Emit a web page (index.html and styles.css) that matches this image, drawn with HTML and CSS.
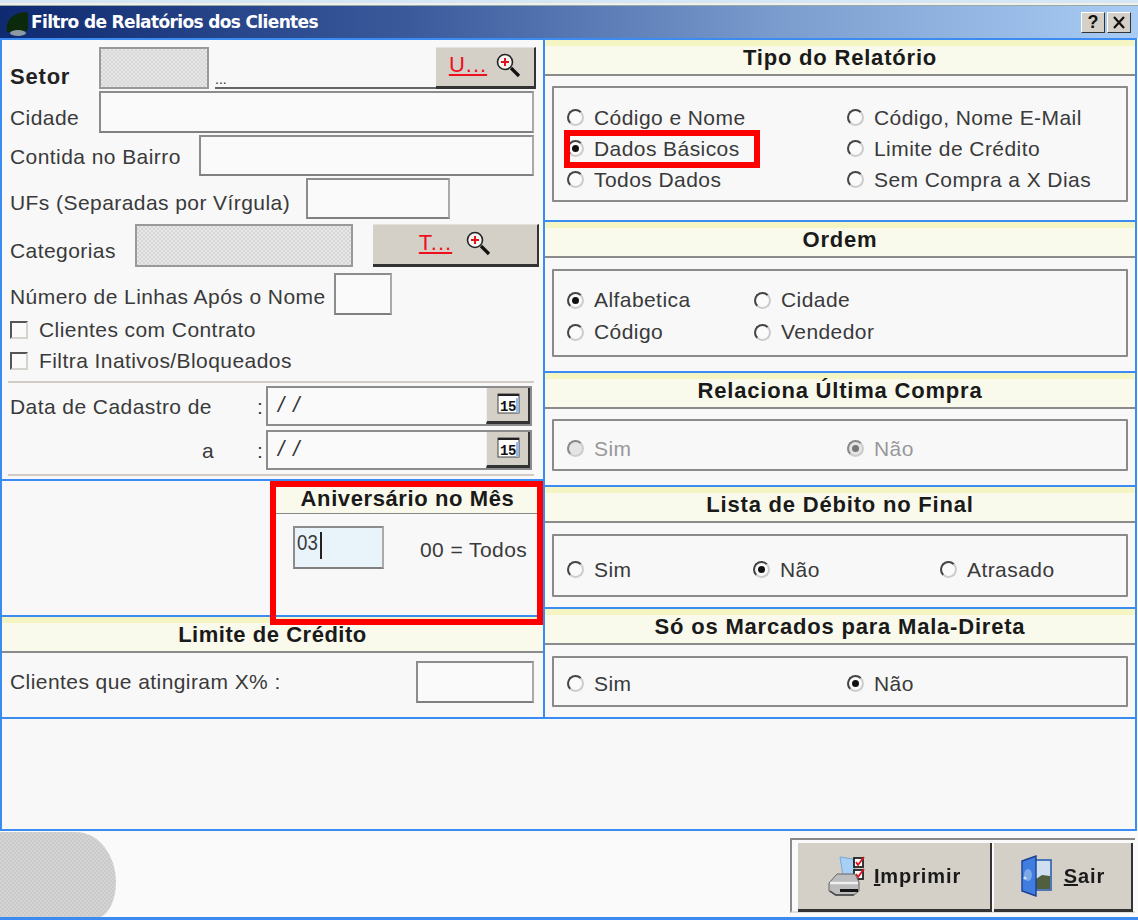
FILE: index.html
```html
<!DOCTYPE html>
<html lang="pt">
<head>
<meta charset="utf-8">
<title>Filtro de Relatórios dos Clientes</title>
<link rel="stylesheet" href="styles.css">
</head>
<body>
<div class="window">
  <div class="top-stripe"></div>
  <header class="titlebar">
    <svg class="app-icon" width="24" height="26" viewBox="0 0 24 26"><path d="M2 22C0 12 6 3 20 2l3 1v17l-8 3z" fill="#0b2a0b"/><ellipse cx="13" cy="23" rx="8" ry="3" fill="#8d9aa6"/></svg>
    <span class="title-text">Filtro de Relatórios dos Clientes</span>
    <div class="title-btns">
      <span class="title-btn">?</span>
      <span class="title-btn">
        <svg width="14" height="13" viewBox="0 0 14 13"><path d="M2 1l10 11M12 1L2 12" stroke="#111" stroke-width="2.2"/></svg>
      </span>
    </div>
  </header>

  <div class="main">
    <div class="col-left">
      <section class="panel p-filters">
        <div class="row r-setor">
          <label class="lbl strong w89 mb0">Setor</label>
          <div class="field grey w110"></div>
          <div class="dots">...</div>
          <button class="tool-btn w100"><span class="hot">U...</span>
            <svg class="lens" width="26" height="26" viewBox="0 0 26 26"><circle cx="10" cy="10" r="7.5" fill="#f4f4f0" stroke="#222" stroke-width="1.6"/><path d="M10 6v8M6 10h8" stroke="#e01020" stroke-width="2"/><path d="M16 16l8 8" stroke="#111" stroke-width="3.2"/></svg>
          </button>
        </div>
        <div class="row r-cidade">
          <label class="lbl w89 mb3">Cidade</label>
          <div class="field w435"></div>
        </div>
        <div class="row r-bairro">
          <label class="lbl w189 mb7">Contida no Bairro</label>
          <div class="field w335"></div>
        </div>
        <div class="row r-ufs">
          <label class="lbl w296 mb4">UFs (Separadas por Vírgula)</label>
          <div class="field w144"></div>
        </div>
        <div class="row r-cat">
          <label class="lbl w125 mb4">Categorias</label>
          <div class="field grey w218"></div>
          <button class="tool-btn w166 gap20"><span class="hot">T...</span>
            <svg class="lens" width="26" height="26" viewBox="0 0 26 26"><circle cx="10" cy="10" r="7.5" fill="#f4f4f0" stroke="#222" stroke-width="1.6"/><path d="M10 6v8M6 10h8" stroke="#e01020" stroke-width="2"/><path d="M16 16l8 8" stroke="#111" stroke-width="3.2"/></svg>
          </button>
        </div>
        <div class="row r-num">
          <label class="lbl w324 mb6">Número de Linhas Após o Nome</label>
          <div class="field w58"></div>
        </div>
        <div class="row r-check1"><span class="check"></span><span class="lbl">Clientes com Contrato</span></div>
        <div class="row r-check2"><span class="check"></span><span class="lbl">Filtra Inativos/Bloqueados</span></div>
        <div class="rule r-rule1"></div>
        <div class="row r-date1">
          <label class="lbl w247 mb7">Data de Cadastro de</label>
          <span class="lbl colon mb7">:</span>
          <div class="field date"><span class="date-text">/ /</span><button class="cal-btn"><svg width="26" height="24" viewBox="0 0 26 24"><rect x="2" y="2" width="21" height="19" fill="#fdfdfd" stroke="#444"/><rect x="2" y="2" width="21" height="2" fill="#222"/><rect x="20" y="6" width="3" height="15" fill="#9db8e0"/><text x="4" y="19" class="cal-num">15</text></svg></button></div>
        </div>
        <div class="row r-date2">
          <label class="lbl w247 a-label mb7">a</label>
          <span class="lbl colon mb7">:</span>
          <div class="field date"><span class="date-text">/ /</span><button class="cal-btn"><svg width="26" height="24" viewBox="0 0 26 24"><rect x="2" y="2" width="21" height="19" fill="#fdfdfd" stroke="#444"/><rect x="2" y="2" width="21" height="2" fill="#222"/><rect x="20" y="6" width="3" height="15" fill="#9db8e0"/><text x="4" y="19" class="cal-num">15</text></svg></button></div>
        </div>
        <div class="rule r-rule2"></div>
      </section>

      <section class="panel p-birthday">
        <div class="bday-body">
          <h2 class="bday-head">Aniversário no Mês</h2>
          <div class="bday-row">
            <div class="field month"><span class="month-val">03</span><span class="caret"></span></div>
            <span class="lbl todos">00 = Todos</span>
          </div>
        </div>
      </section>

      <section class="panel p-credit">
        <h2 class="head head-tight">Limite de Crédito</h2>
        <div class="credit-row">
          <label class="lbl w406">Clientes que atingiram X% :</label>
          <div class="field w118"></div>
        </div>
      </section>
      <div class="highlight-month"></div>
    </div>

    <div class="col-right">
      <section class="panel p-tipo">
        <h2 class="head">Tipo do Relatório</h2>
        <div class="group g-tipo">
          <div class="radio-grid cols-280">
            <div class="radio r1"><span class="dot"></span>Código e Nome</div>
            <div class="radio r1"><span class="dot"></span>Código, Nome E-Mail</div>
            <div class="radio r1 highlight-host"><span class="dot on"></span>Dados Básicos<span class="highlight-basic"></span></div>
            <div class="radio r1"><span class="dot"></span>Limite de Crédito</div>
            <div class="radio r1"><span class="dot"></span>Todos Dados</div>
            <div class="radio r1"><span class="dot"></span>Sem Compra a X Dias</div>
          </div>
        </div>
      </section>
      <section class="panel p-ordem">
        <h2 class="head">Ordem</h2>
        <div class="group g-ordem">
          <div class="radio-grid cols-187 rows-32">
            <div class="radio"><span class="dot on"></span>Alfabetica</div>
            <div class="radio"><span class="dot"></span>Cidade</div>
            <div class="radio"><span class="dot"></span>Código</div>
            <div class="radio"><span class="dot"></span>Vendedor</div>
          </div>
        </div>
      </section>
      <section class="panel p-relaciona">
        <h2 class="head">Relaciona Última Compra</h2>
        <div class="group g-rel">
          <div class="radio-grid cols-280">
            <div class="radio off"><span class="dot off-dot"></span>Sim</div>
            <div class="radio off"><span class="dot on off-dot"></span>Não</div>
          </div>
        </div>
      </section>
      <section class="panel p-lista">
        <h2 class="head">Lista de Débito no Final</h2>
        <div class="group g-lista">
          <div class="radio-grid cols-3">
            <div class="radio"><span class="dot"></span>Sim</div>
            <div class="radio"><span class="dot on"></span>Não</div>
            <div class="radio"><span class="dot"></span>Atrasado</div>
          </div>
        </div>
      </section>
      <section class="panel p-mala">
        <h2 class="head">Só os Marcados para Mala-Direta</h2>
        <div class="group g-mala">
          <div class="radio-grid cols-280">
            <div class="radio"><span class="dot"></span>Sim</div>
            <div class="radio"><span class="dot on"></span>Não</div>
          </div>
        </div>
      </section>
    </div>
  </div>
  <section class="panel p-empty"></section>

  <footer class="footer">
    <div class="blob"></div>
    <div class="actions">
      <button class="act-btn act-print">
        <svg width="44" height="42" viewBox="0 0 44 42">
          <path d="M13 2l13 2 3 17H16z" fill="#a8d0f4" stroke="#7aa8d8"/>
          <rect x="27" y="3" width="9" height="9" fill="#fff" stroke="#222" stroke-width="1.8"/>
          <rect x="27" y="15" width="9" height="9" fill="#fff" stroke="#222" stroke-width="1.8"/>
          <path d="M29 7l2 3 6-8M29 19l2 3 6-8" fill="none" stroke="#e01020" stroke-width="1.8"/>
          <path d="M2 28l8-9h18l4 8v9l-5 4H8l-6-4z" fill="#bdbdbd" stroke="#666"/>
          <path d="M3 28h28" stroke="#f0f0f0" stroke-width="2.4"/>
          <path d="M13 34h18v3H13z" fill="#151515"/>
          <path d="M3 36l6 4h18" fill="none" stroke="#444" stroke-width="1.4"/>
        </svg>
        <span class="act-text"><u>I</u>mprimir</span>
      </button>
      <button class="act-btn act-exit">
        <svg width="34" height="42" viewBox="0 0 34 42">
          <rect x="14" y="5" width="17" height="30" fill="#cfdff0" stroke="#2c5fb0" stroke-width="1.6"/>
          <path d="M16 24l6-4 8 1v13H16z" fill="#50603f"/>
          <path d="M2 6l14-5v40L2 36z" fill="#3f7de0" stroke="#1c3f90" stroke-width="1.4"/>
          <ellipse cx="8" cy="20" rx="4" ry="6" fill="#7fa8e8"/>
          <circle cx="5" cy="23" r="1.6" fill="#d0e2f8"/>
        </svg>
        <span class="act-text"><u>S</u>air</span>
      </button>
    </div>
  </footer>
  <div class="bottom-line"></div>
</div>
</body>
</html>
```
FILE: styles.css
```css
* { box-sizing: border-box; }
html, body { margin: 0; padding: 0; }
body {
  width: 1138px;
  height: 920px;
  overflow: hidden;
  background: #fafafb;
  font-family: "Liberation Sans", Arial, sans-serif;
  color: #333;
}
.window {
  width: 1138px;
  height: 920px;
  display: flex;
  flex-direction: column;
  filter: blur(.35px);
}
.top-stripe {
  height: 6px;
  background: linear-gradient(#d6e6f4 0 3px, #f0f0ea 3px 5px, #9aa 5px);
}
.titlebar {
  height: 32px;
  display: flex;
  align-items: center;
  padding: 0 7px 0 5px;
  background: linear-gradient(90deg, #0f2a70 0%, #3a5a9c 36%, #7d9fd0 70%, #a8ccf4 100%);
  flex: none;
}
.app-icon { flex: none; margin-top: 2px; margin-right: 2px; }
.title-text {
  color: #fff;
  font: bold 17px "DejaVu Sans", sans-serif;
  letter-spacing: -.64px;
  flex: 1;
}
.title-btns { display: flex; gap: 2px; }
.title-btn {
  width: 24px;
  height: 21px;
  display: flex;
  align-items: center;
  justify-content: center;
  background: #d4d0c8;
  border: 1px solid;
  border-color: #fff #333 #333 #fff;
  color: #111;
  font: bold 18px "Liberation Sans", sans-serif;
}
.main { display: flex; flex: none; }
.col-left { width: 545px; position: relative; flex: none; }
.col-right { width: 594px; margin-left: -2px; flex: none; }
.panel {
  border: 2px solid #3a8cf2;
  margin-top: -2px;
  background: #f8f8f9;
}
.col-left .panel:first-child, .col-right .panel:first-child { margin-top: 0; }
.p-filters { height: 443px; padding: 7px 0 0 8px; }
.p-birthday { height: 138px; padding-left: 270px; }
.p-credit { height: 104px; }
.p-empty { height: 114px; width: 1137px; flex: none; }
.p-tipo { height: 184px; }
.p-ordem { height: 153px; }
.p-relaciona { height: 116px; }
.p-lista { height: 124px; }
.p-mala { height: 112px; }

.row { display: flex; align-items: flex-end; }
.r-setor { height: 42px; }
.r-cidade { height: 42px; margin-top: 2px; }
.r-bairro { height: 41px; margin-top: 2px; }
.r-ufs { height: 41px; margin-top: 2px; }
.r-cat { height: 43px; margin-top: 5px; }
.r-num { height: 42px; margin-top: 6px; }
.r-check1 { height: 20px; margin-top: 5px; align-items: center; }
.r-check2 { height: 20px; margin-top: 11px; align-items: center; }
.r-date1 { height: 40px; margin-top: 3px; }
.r-date2 { height: 40px; margin-top: 4px; }
.rule { height: 2px; width: 526px; margin-left: -2px; background: #d0ccc4; }
.r-rule1 { margin-top: 10px; }
.r-rule2 { margin-top: 4px; }

.lbl { font-size: 21px; letter-spacing: .43px; line-height: 24px; white-space: nowrap; color: #3a3a3a; flex: none; }
.strong { font-weight: bold; font-size: 22px; letter-spacing: .8px; color: #222; }
.mb0 { margin-bottom: 0; }
.mb3 { margin-bottom: 3px; }
.mb4 { margin-bottom: 4px; }
.mb6 { margin-bottom: 6px; }
.mb7 { margin-bottom: 7px; }
.w89 { width: 89px; }
.w125 { width: 125px; }
.w189 { width: 189px; }
.w296 { width: 296px; }
.w324 { width: 324px; }
.w247 { width: 247px; }
.w406 { width: 406px; }
.a-label { text-align: right; padding-right: 43px; }
.colon { width: 9px; }

.field {
  height: 100%;
  flex: none;
  background: #fafafb;
  border: 2px solid #8c8c8c;
  border-right-color: #aaa;
  border-bottom-color: #808080;
}
.field.grey {
  background: repeating-conic-gradient(#d8d8d8 0 25%, #e6e6e6 0 50%) 0 0 / 4px 4px;
  border-color: #999;
}
.w58 { width: 58px; }
.w110 { width: 110px; }
.w118 { width: 118px; }
.w144 { width: 144px; }
.w218 { width: 218px; }
.w335 { width: 335px; }
.w435 { width: 435px; }

.dots {
  width: 221px;
  height: 42px;
  margin-left: 6px;
  padding-bottom: 1px;
  border-bottom: 2px solid #666;
  display: flex;
  align-items: flex-end;
  font-size: 14px;
  line-height: 14px;
}
.tool-btn {
  height: 100%;
  flex: none;
  padding: 0 0 4px;
  display: flex;
  align-items: center;
  justify-content: center;
  gap: 8px;
  background: #d4d0c8;
  border: none;
  border-top: 1px solid #e4e2dc;
  border-right: 2px solid #333;
  border-bottom: 3px solid #333;
  font: 22px "Liberation Sans", sans-serif;
}
.w100 { width: 100px; }
.w166 { width: 166px; margin-left: 20px; }
.gap20 { gap: 13px; }
.hot { color: #ee1020; text-decoration: underline; line-height: 24px; letter-spacing: 1px; }
.lens { flex: none; }

.check {
  width: 18px;
  height: 18px;
  margin: 0 11px 0 0;
  flex: none;
  background: #fafafb;
  border: 2px solid;
  border-color: #555 #d6d3cc #d6d3cc #555;
}

.date {
  width: 266px;
  margin-left: 0;
  display: flex;
  justify-content: space-between;
  padding: 0;
  border-color: #8c8c8c;
}
.date-text {
  font: italic 22px/34px "Liberation Sans", sans-serif;
  margin-left: 10px;
  letter-spacing: 1.5px;
}
.cal-btn {
  width: 44px;
  height: 100%;
  padding: 0 0 2px 3px;
  display: flex;
  align-items: center;
  justify-content: center;
  background: #d4d0c8;
  border: none;
  border-left: 1px solid #eee;
  border-right: 2px solid #333;
  border-bottom: 3px solid #333;
}
.cal-num { font: bold 14px "Liberation Mono", monospace; fill: #111; letter-spacing: -.5px; }

.head {
  margin: 0;
  height: 36px;
  padding-top: 2px;
  display: flex;
  align-items: center;
  justify-content: center;
  background: linear-gradient(#f5f5c4 0 6px, #f9f9ec 6px);
  border-bottom: 2px solid #8a8a8a;
  font-size: 22px;
  font-weight: bold;
  color: #1a1a1a;
  letter-spacing: .8px;
}
.head-tight { letter-spacing: .53px; }
.bday-body { height: 100%; }
.bday-head {
  margin: 4px 0 0;
  height: 29px;
  display: flex;
  align-items: center;
  justify-content: center;
  background: #f9f9ec;
  border-bottom: 1px solid #8a8a8a;
  font-size: 22px;
  letter-spacing: .6px;
  font-weight: bold;
  color: #1a1a1a;
}
.bday-row { display: flex; align-items: flex-start; padding: 12px 0 0 21px; }
.month {
  width: 91px;
  height: 43px;
  background: #e8f3fa;
  display: flex;
  align-items: flex-start;
  padding: 3px 0 0 2px;
  font-size: 22px;
  line-height: 24px;
}
.month-val { color: #3a3a3a; transform: scaleX(.85); transform-origin: left; width: 23px; }
.caret { width: 2px; height: 27px; margin-top: 1px; background: #222; }
.todos { margin: 12px 0 0 36px; }

.credit-row { display: flex; align-items: flex-start; padding: 8px 0 0 8px; }
.credit-row .lbl { margin-top: 9px; }
.credit-row .field { height: 42px; }

.group {
  margin: 10px 7px 0 7px;
  border: 2px solid #8a8a8a;
  background: #f8f8f9;
  border-radius: 1px;
}
.g-tipo { height: 116px; padding: 14px 0 0 13px; }
.g-ordem { height: 88px; margin-top: 11px; padding: 13px 0 0 13px; }
.g-rel { height: 52px; padding: 12px 0 0 13px; }
.g-lista { height: 63px; margin-top: 11px; padding: 18px 0 0 13px; }
.g-mala { height: 51px; margin-top: 11px; padding: 10px 0 0 13px; }

.radio-grid { display: grid; grid-auto-rows: 31px; }
.rows-32 { grid-auto-rows: 32px; }
.cols-280 { grid-template-columns: 280px 280px; }
.cols-187 { grid-template-columns: 187px 187px; }
.cols-3 { grid-template-columns: 186px 187px 187px; }
.radio {
  display: flex;
  align-items: center;
  font-size: 21px;
  letter-spacing: .43px;
  line-height: 24px;
  color: #3a3a3a;
  white-space: nowrap;
  position: relative;
}
.radio.off { color: #999; }
.dot {
  width: 17px;
  height: 17px;
  margin-right: 10px;
  flex: none;
  border-radius: 50%;
  border: 2px solid;
  border-color: #444 #ccc #ccc #444;
  background: #fafafb;
  display: flex;
  align-items: center;
  justify-content: center;
}
.dot.on::after {
  content: "";
  width: 7px;
  height: 7px;
  border-radius: 50%;
  background: #111;
}
.off-dot { border-color: #888 #ccc #ccc #888; background: #e4e4e4; }
.dot.on.off-dot::after { background: #777; }

.highlight-basic {
  position: absolute;
  left: -3px;
  top: -3px;
  width: 196px;
  height: 38px;
  border: 6px solid #f00;
  pointer-events: none;
}
.highlight-month {
  position: absolute;
  left: 270px;
  top: 443px;
  width: 273px;
  height: 144px;
  border: 6px solid #f00;
  pointer-events: none;
}

.footer {
  flex: none;
  height: 85px;
  margin-top: 2px;
  position: relative;
  display: flex;
  justify-content: flex-end;
  padding: 5px 3px 0 0;
  background: #fafafb;
}
.blob {
  position: absolute;
  left: 0;
  top: -1px;
  width: 116px;
  height: 86px;
  border-radius: 0 40px 20px 0 / 0 50px 36px 0;
  background: repeating-conic-gradient(#cacaca 0 25%, #d4d4d4 0 50%) 0 0 / 4px 4px;
}
.actions {
  width: 345px;
  height: 75px;
  padding: 3px 0 0 6px;
  display: flex;
  gap: 2px;
  border: 2px solid #8a8a8a;
  border-right: 0;
  border-bottom: 2px solid #ddd;
}
.act-btn {
  height: 69px;
  display: flex;
  align-items: center;
  justify-content: center;
  gap: 3px;
  background: #d4d0c8;
  border: none;
  border-right: 2px solid #333;
  border-bottom: 3px solid #333;
  padding: 0;
  font: bold 20px "Liberation Sans", sans-serif;
  color: #1a1a1a;
}
.act-print { width: 194px; }
.act-exit { width: 139px; gap: 10px; }
.act-text { letter-spacing: .9px; }
.bottom-line { height: 3px; margin-top: -1px; background: #3a8cf2; position: relative; }
```
